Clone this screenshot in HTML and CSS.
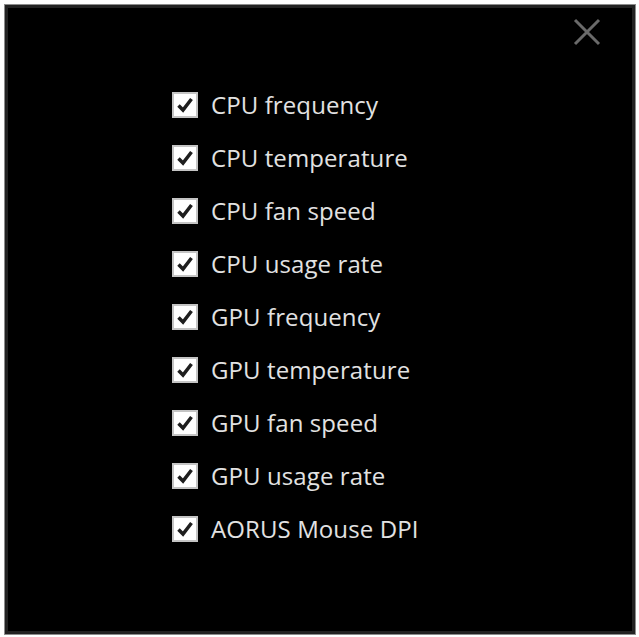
FILE: index.html
```html
<!DOCTYPE html>
<html lang="en">
<head>
  <meta charset="UTF-8">
  <title>Monitor Settings</title>
  <link rel="stylesheet" href="styles.css">
</head>
<body>
  <div class="panel">
    <button class="close" aria-label="Close">
      <svg width="28" height="28" viewBox="0 0 28 28">
        <path d="M2 2 L26 26 M26 2 L2 26" stroke="#6a6a6a" stroke-width="3" fill="none"/>
      </svg>
    </button>
    <ul class="options">
      <li><span class="box"><svg viewBox="0 0 20 20"><path d="M3.5 10.5 L8 15 L16.5 4" /></svg></span>CPU frequency</li>
      <li><span class="box"><svg viewBox="0 0 20 20"><path d="M3.5 10.5 L8 15 L16.5 4" /></svg></span>CPU temperature</li>
      <li><span class="box"><svg viewBox="0 0 20 20"><path d="M3.5 10.5 L8 15 L16.5 4" /></svg></span>CPU fan speed</li>
      <li><span class="box"><svg viewBox="0 0 20 20"><path d="M3.5 10.5 L8 15 L16.5 4" /></svg></span>CPU usage rate</li>
      <li><span class="box"><svg viewBox="0 0 20 20"><path d="M3.5 10.5 L8 15 L16.5 4" /></svg></span>GPU frequency</li>
      <li><span class="box"><svg viewBox="0 0 20 20"><path d="M3.5 10.5 L8 15 L16.5 4" /></svg></span>GPU temperature</li>
      <li><span class="box"><svg viewBox="0 0 20 20"><path d="M3.5 10.5 L8 15 L16.5 4" /></svg></span>GPU fan speed</li>
      <li><span class="box"><svg viewBox="0 0 20 20"><path d="M3.5 10.5 L8 15 L16.5 4" /></svg></span>GPU usage rate</li>
      <li><span class="box"><svg viewBox="0 0 20 20"><path d="M3.5 10.5 L8 15 L16.5 4" /></svg></span>AORUS Mouse DPI</li>
    </ul>
  </div>
</body>
</html>
```

FILE: styles.css
```css
* {
  margin: 0;
  padding: 0;
  box-sizing: border-box;
}

body {
  background: #fff;
  padding: 4px;
  font-family: 'Open Sans', 'Noto Sans', sans-serif;
}

.panel {
  position: relative;
  width: 632px;
  height: 631px;
  background: #000;
  border: 1px solid #8c8c8c;
  box-shadow: inset 0 0 0 3px #222;
  padding: 73px 0 0 167px;
}

.close {
  position: absolute;
  top: 13px;
  right: 34px;
  background: none;
  border: none;
  width: 28px;
  height: 28px;
  cursor: pointer;
}

.close svg {
  display: block;
}

.options {
  list-style: none;
}

.options li {
  display: flex;
  align-items: center;
  height: 53px;
  color: #e2e2e2;
  font-size: 24px;
  letter-spacing: 0.1px;
  gap: 13px;
}

.box {
  width: 26px;
  height: 26px;
  background: #fff;
  border: 2px solid #c4c4c4;
  display: flex;
  align-items: center;
  justify-content: center;
}

.box svg {
  width: 20px;
  height: 20px;
}

.box path {
  fill: none;
  stroke: #1e1e1e;
  stroke-width: 3.5;
}
```
